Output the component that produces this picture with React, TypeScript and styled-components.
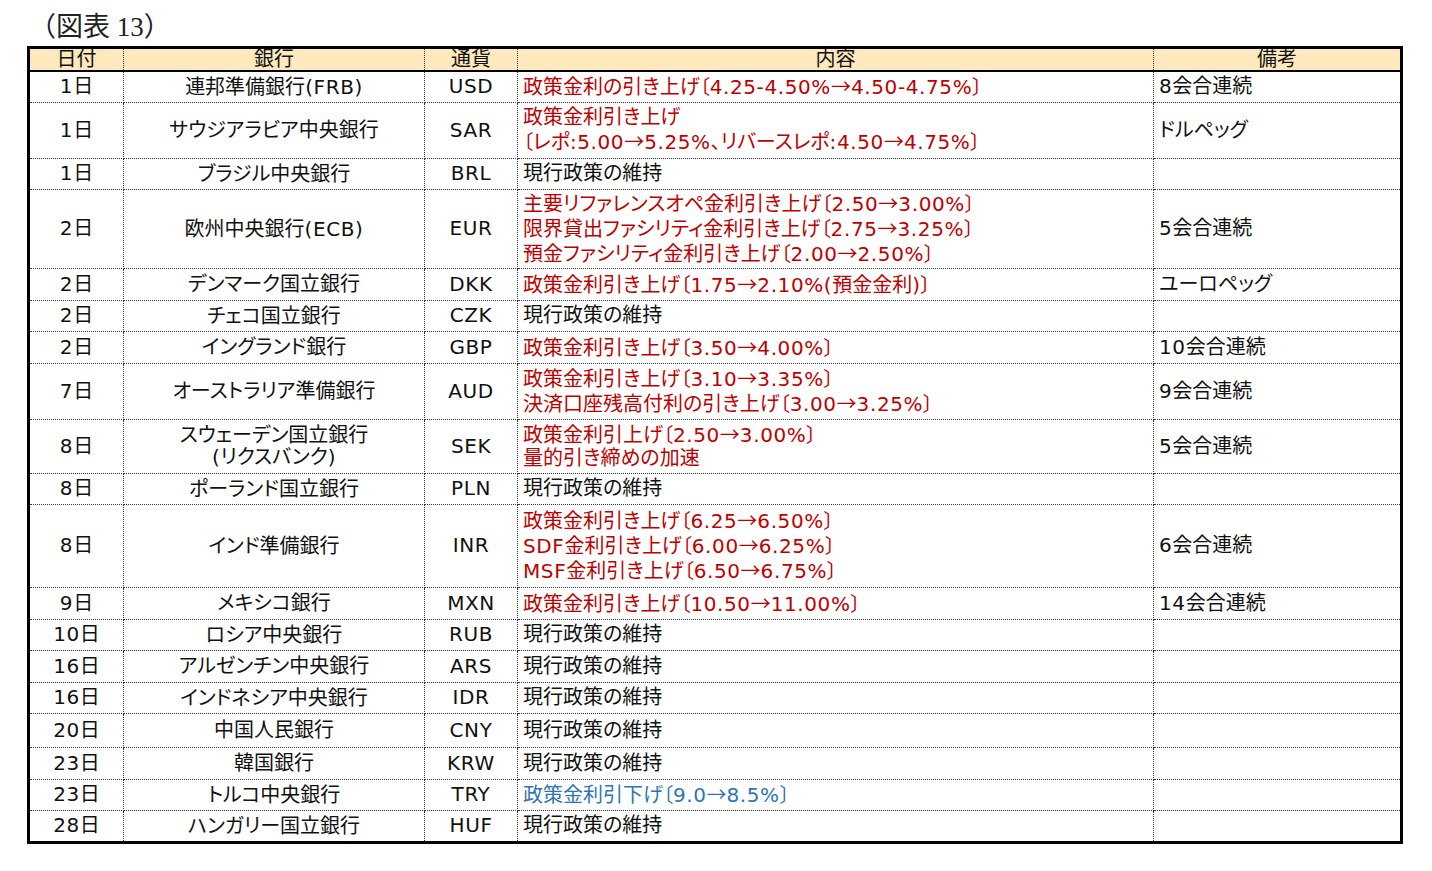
import styled, { createGlobalStyle } from "styled-components";

type Tone = "up" | "down" | "plain";

interface RowData {
  date: string;
  bank: string[];
  ccy: string;
  lines: string[];
  tone: Tone;
  note?: string;
  h: number;
}

const rows: RowData[] = [
  { date: "1日", bank: ["連邦準備銀行(FRB)"], ccy: "USD", lines: ["政策金利の引き上げ〔4.25-4.50%→4.50-4.75%〕"], tone: "up", note: "8会合連続", h: 31 },
  { date: "1日", bank: ["サウジアラビア中央銀行"], ccy: "SAR", lines: ["政策金利引き上げ", "〔レポ:5.00→5.25%、リバースレポ:4.50→4.75%〕"], tone: "up", note: "ドルペッグ", h: 56 },
  { date: "1日", bank: ["ブラジル中央銀行"], ccy: "BRL", lines: ["現行政策の維持"], tone: "plain", h: 31 },
  { date: "2日", bank: ["欧州中央銀行(ECB)"], ccy: "EUR", lines: ["主要リファレンスオペ金利引き上げ〔2.50→3.00%〕", "限界貸出ファシリティ金利引き上げ〔2.75→3.25%〕", "預金ファシリティ金利引き上げ〔2.00→2.50%〕"], tone: "up", note: "5会合連続", h: 79 },
  { date: "2日", bank: ["デンマーク国立銀行"], ccy: "DKK", lines: ["政策金利引き上げ〔1.75→2.10%(預金金利)〕"], tone: "up", note: "ユーロペッグ", h: 32 },
  { date: "2日", bank: ["チェコ国立銀行"], ccy: "CZK", lines: ["現行政策の維持"], tone: "plain", h: 31 },
  { date: "2日", bank: ["イングランド銀行"], ccy: "GBP", lines: ["政策金利引き上げ〔3.50→4.00%〕"], tone: "up", note: "10会合連続", h: 32 },
  { date: "7日", bank: ["オーストラリア準備銀行"], ccy: "AUD", lines: ["政策金利引き上げ〔3.10→3.35%〕", "決済口座残高付利の引き上げ〔3.00→3.25%〕"], tone: "up", note: "9会合連続", h: 56 },
  { date: "8日", bank: ["スウェーデン国立銀行", "(リクスバンク)"], ccy: "SEK", lines: ["政策金利引上げ〔2.50→3.00%〕", "量的引き締めの加速"], tone: "up", note: "5会合連続", h: 54 },
  { date: "8日", bank: ["ポーランド国立銀行"], ccy: "PLN", lines: ["現行政策の維持"], tone: "plain", h: 31 },
  { date: "8日", bank: ["インド準備銀行"], ccy: "INR", lines: ["政策金利引き上げ〔6.25→6.50%〕", "SDF金利引き上げ〔6.00→6.25%〕", "MSF金利引き上げ〔6.50→6.75%〕"], tone: "up", note: "6会合連続", h: 83 },
  { date: "9日", bank: ["メキシコ銀行"], ccy: "MXN", lines: ["政策金利引き上げ〔10.50→11.00%〕"], tone: "up", note: "14会合連続", h: 32 },
  { date: "10日", bank: ["ロシア中央銀行"], ccy: "RUB", lines: ["現行政策の維持"], tone: "plain", h: 31 },
  { date: "16日", bank: ["アルゼンチン中央銀行"], ccy: "ARS", lines: ["現行政策の維持"], tone: "plain", h: 32 },
  { date: "16日", bank: ["インドネシア中央銀行"], ccy: "IDR", lines: ["現行政策の維持"], tone: "plain", h: 31 },
  { date: "20日", bank: ["中国人民銀行"], ccy: "CNY", lines: ["現行政策の維持"], tone: "plain", h: 34 },
  { date: "23日", bank: ["韓国銀行"], ccy: "KRW", lines: ["現行政策の維持"], tone: "plain", h: 32 },
  { date: "23日", bank: ["トルコ中央銀行"], ccy: "TRY", lines: ["政策金利引下げ〔9.0→8.5%〕"], tone: "down", h: 31 },
  { date: "28日", bank: ["ハンガリー国立銀行"], ccy: "HUF", lines: ["現行政策の維持"], tone: "plain", h: 32 },
];

const toneColor: Record<Tone, string> = {
  up: "#c00000",
  down: "#2e75b6",
  plain: "#111111",
};

const colWidths = [95, 301, 93, 636, 248];

// latin runs get a touch of tracking, arrows come from the CJK font (wider)
function Rich({ text }: { text: string }) {
  const parts = text.split(/(→|[0-9A-Za-z.\-%:()]+)/).filter(Boolean);
  return (
    <>
      {parts.map((p, i) =>
        p === "→" ? (
          <Arrow key={i}>→</Arrow>
        ) : /^[0-9A-Za-z.\-%:()]+$/.test(p) ? (
          <Latin key={i}>{p}</Latin>
        ) : (
          <span key={i}>{p}</span>
        )
      )}
    </>
  );
}

export default function App() {
  return (
    <>
      <GlobalStyle />
      <Page>
        <Title>（図表 13）</Title>
        <Table>
          <colgroup>
            {colWidths.map((w, i) => (
              <col key={i} style={{ width: w }} />
            ))}
          </colgroup>
          <thead>
            <tr>
              <HeadCell>日付</HeadCell>
              <HeadCell>銀行</HeadCell>
              <HeadCell>通貨</HeadCell>
              <HeadCell>内容</HeadCell>
              <HeadCell>備考</HeadCell>
            </tr>
          </thead>
          <tbody>
            {rows.map((r, i) => (
              <Row key={i} $h={r.h}>
                <Cell $align="center">
                  <Rich text={r.date} />
                </Cell>
                <Cell $align="center">
                  {r.bank.map((b) => (
                    <Line key={b} $lh={22}>
                      <Rich text={b} />
                    </Line>
                  ))}
                </Cell>
                <Cell $align="center">
                  <Rich text={r.ccy} />
                </Cell>
                <Cell $align="left">
                  {r.lines.map((l) => (
                    <Line key={l} $tone={r.tone} $lh={r.lines.length > 2 ? 24 : 23}>
                      <Rich text={l} />
                    </Line>
                  ))}
                </Cell>
                <Cell $align="left">
                  <Rich text={r.note ?? ""} />
                </Cell>
              </Row>
            ))}
          </tbody>
        </Table>
      </Page>
    </>
  );
}

const GlobalStyle = createGlobalStyle`
  html, body {
    margin: 0;
    padding: 0;
    background: #ffffff;
  }
`;

const Page = styled.div`
  width: 1432px;
  height: 871px;
  padding: 10px 0 0 27px;
  box-sizing: border-box;
  font-family: "DejaVu Sans", "Noto Sans CJK JP", sans-serif;
  font-feature-settings: "palt";
  color: #111111;
`;

const Title = styled.div`
  font-family: "Liberation Serif", "Noto Sans CJK JP", serif;
  font-feature-settings: normal;
  font-size: 27px;
  line-height: 34px;
  height: 36px;
  margin-left: 2px;
  color: #222222;
`;

const Table = styled.table`
  border-collapse: collapse;
  table-layout: fixed;
  width: 1373px;
  border: 3px solid #000000;
`;

const HeadCell = styled.th`
  background: #fde9bd;
  font-weight: 400;
  font-size: 20px;
  line-height: 21px;
  height: 21px;
  padding: 0;
  text-align: center;
  vertical-align: top;
  border-left: 1px dotted #333333;
  border-right: 1px dotted #333333;
  border-bottom: 2px solid #000000;
`;

const Row = styled.tr<{ $h: number }>`
  height: ${(p) => p.$h}px;
`;

const Cell = styled.td<{ $align: "left" | "center" }>`
  font-size: 20px;
  line-height: 23px;
  padding: 0 5px;
  text-align: ${(p) => p.$align};
  vertical-align: middle;
  border: 1px dotted #333333;
  white-space: nowrap;
  overflow: hidden;
`;

const Line = styled.div<{ $tone?: Tone; $lh: number }>`
  color: ${(p) => (p.$tone ? toneColor[p.$tone] : "inherit")};
  line-height: ${(p) => p.$lh}px;
`;

const Latin = styled.span`
  letter-spacing: 0.6px;
`;

const Arrow = styled.span`
  font-family: "Noto Sans CJK JP", sans-serif;
  font-feature-settings: normal;
`;
